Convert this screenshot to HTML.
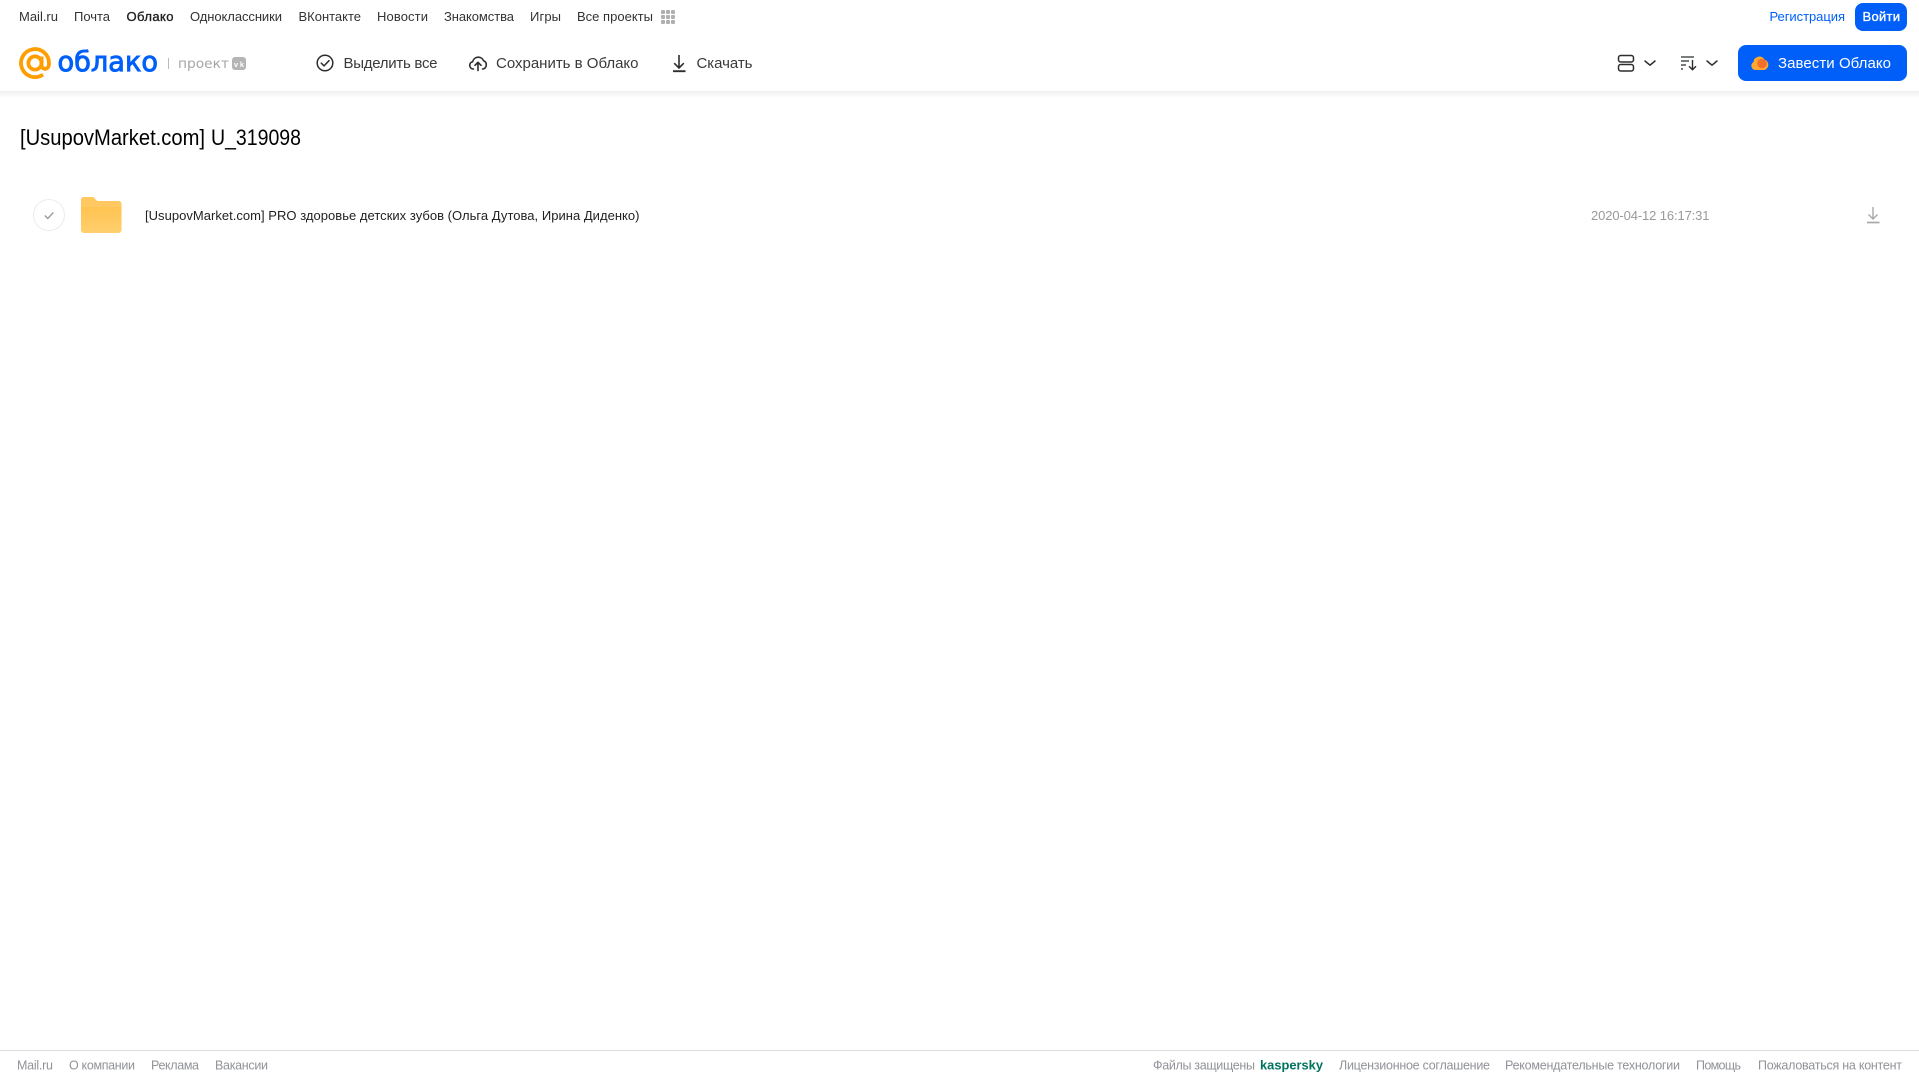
<!DOCTYPE html>
<html lang="ru"><head><meta charset="utf-8"><title>[UsupovMarket.com] U_319098</title>
<style>
html,body{margin:0;padding:0;background:#fff;width:1919px;height:1079px;overflow:hidden}
svg{display:block;position:absolute;left:0;top:0}
text{font-family:"Liberation Sans",Arial,sans-serif}
.n{font-size:13px;fill:#333}
.h{font-size:15px;fill:#3a3a3a}
.f{font-size:12.5px;fill:#919399}
</style></head><body>
<svg width="1919" height="1079" viewBox="0 0 1919 1079" xmlns="http://www.w3.org/2000/svg">
<defs>
<linearGradient id="sh" x1="0" y1="0" x2="0" y2="1"><stop offset="0" stop-color="#f0f0f0"/><stop offset="1" stop-color="#fff"/></linearGradient>
<linearGradient id="fd" x1="0" y1="0" x2="0" y2="1"><stop offset="0" stop-color="#ffbe45"/><stop offset="1" stop-color="#ffcf6e"/></linearGradient>
</defs>
<rect x="0" y="91" width="1919" height="7" fill="url(#sh)"/>

<!-- top nav -->
<g class="nav">
<text class="n" x="19" y="21" textLength="39">Mail.ru</text>
<text class="n" x="74" y="21" textLength="36">Почта</text>
<text class="n" x="126.5" y="21" textLength="47" stroke="#222" stroke-width=".35" style="fill:#222">Облако</text>
<text class="n" x="190" y="21" textLength="92">Одноклассники</text>
<text class="n" x="298.5" y="21" textLength="62.5">ВКонтакте</text>
<text class="n" x="377" y="21" textLength="51">Новости</text>
<text class="n" x="444" y="21" textLength="70">Знакомства</text>
<text class="n" x="530" y="21" textLength="31">Игры</text>
<text class="n" x="577" y="21" textLength="76">Все проекты</text>
</g>
<g fill="#b0b0b0">
<rect x="661" y="10" width="4" height="4" rx="1"/><rect x="666" y="10" width="4" height="4" rx="1"/><rect x="671" y="10" width="4" height="4" rx="1"/>
<rect x="661" y="15" width="4" height="4" rx="1"/><rect x="666" y="15" width="4" height="4" rx="1"/><rect x="671" y="15" width="4" height="4" rx="1"/>
<rect x="661" y="20" width="4" height="4" rx="1"/><rect x="666" y="20" width="4" height="4" rx="1"/><rect x="671" y="20" width="4" height="4" rx="1"/>
</g>
<text x="1769.5" y="21" font-size="13" fill="#005ff9" textLength="75.5">Регистрация</text>
<rect x="1855" y="3" width="52" height="28" rx="8" fill="#005ff9"/>
<text x="1862.5" y="21" font-size="13" stroke="#fff" stroke-width=".35" fill="#fff" textLength="37.5">Войти</text>

<!-- logo -->
<g fill="none" stroke="#ff9e00" stroke-width="3.8">
<circle cx="35" cy="63" r="6.6"/>
<path d="M41.6 56.5V65.5C41.6 70 49 70.5 49 63.5A14 14 0 1 0 43 74.6"/>
</g>
<text x="57.5" y="71" font-size="28" fill="#005ff9" stroke="#005ff9" stroke-width=".9" style="font-family:'DejaVu Sans',sans-serif" textLength="100.5" lengthAdjust="spacingAndGlyphs">облако</text>
<rect x="168" y="58" width="1" height="11" fill="#bbb"/>
<text x="178" y="68" font-size="13.5" fill="#a6a6a6" style="font-family:'DejaVu Sans',sans-serif" textLength="51" lengthAdjust="spacingAndGlyphs">проект</text>
<rect x="232" y="57" width="14" height="13" rx="3" fill="#b5b5b5"/>
<text x="234" y="67" font-size="7.5" font-weight="700" fill="#fff" textLength="10">vk</text>

<!-- toolbar -->
<g fill="none" stroke="#2c2d2e" stroke-width="1.5">
<circle cx="325" cy="63" r="7.8"/>
<path d="M321.3 63.2l2.7 2.7 5-5.2" stroke-linecap="round" stroke-linejoin="round"/>
</g>
<text class="h" x="343.5" y="68" textLength="94">Выделить все</text>
<g fill="none" stroke="#2c2d2e" stroke-width="1.6" stroke-linecap="round" stroke-linejoin="round">
<path d="M473.5 69H473A3.7 3.7 0 0 1 472.7 61.7A5.7 5.7 0 0 1 483.6 60.8A4.3 4.3 0 0 1 482.8 69H482.5"/>
<path d="M478 70.5V62.5M475 65.3L478 62.3L481 65.3"/>
</g>
<text class="h" x="496" y="68" textLength="142.5">Сохранить в Облако</text>
<g fill="none" stroke="#2c2d2e" stroke-width="1.6">
<path d="M679 55V68M674.2 63.2L679 68L683.8 63.2"/>
<path d="M673 71.2H685.5" stroke-width="1.9"/>
</g>
<text class="h" x="696.5" y="68" textLength="56">Скачать</text>

<!-- right tools -->
<g fill="none" stroke="#2c2d2e" stroke-width="1.5">
<rect x="1618.5" y="55.5" width="15" height="6.5" rx="2.2"/>
<rect x="1618.5" y="64.5" width="15" height="6.5" rx="2.2"/>
<path d="M1645 61l5 4.2 5-4.2" stroke-linecap="round" stroke-linejoin="round"/>
<path d="M1681 57H1694M1681 61H1689M1681 65H1686M1681 69H1683" stroke-width="1.2"/>
<path d="M1692.5 60V69.5M1689 66.2l3.5 3.5 3.5-3.5" stroke-width="1.4"/>
<path d="M1707 61l5 4.2 5-4.2" stroke-linecap="round" stroke-linejoin="round"/>
</g>
<rect x="1738" y="45" width="169" height="36" rx="8" fill="#005ff9"/>
<path d="M1755.5 70A4.3 4.3 0 0 1 1753.5 62A5.5 5.5 0 0 1 1757.5 57A5.5 5.5 0 0 1 1764.5 59.5A5.5 5.5 0 0 1 1764.5 70Z" fill="#ffa930"/>
<circle cx="1762" cy="63.5" r="4.8" fill="#f2702a"/>
<text x="1778" y="68" font-size="15" fill="#fff" textLength="113">Завести Облако</text>

<!-- title -->
<text x="20" y="145" font-size="22" fill="#000" textLength="185" lengthAdjust="spacingAndGlyphs">[UsupovMarket.com]</text>
<text x="211" y="145" font-size="22" fill="#000" textLength="90" lengthAdjust="spacingAndGlyphs">U_319098</text>

<!-- row -->
<circle cx="49" cy="215" r="15.5" fill="#fff" stroke="#ececec"/>
<path d="M44.8 215.5l3 3 5.5-6" fill="none" stroke="#999" stroke-width="1.3"/>
<path d="M81 200A3 3 0 0 1 84 197H92C95 197 95.5 201 98 201H118.5A3 3 0 0 1 121.5 204V230A3 3 0 0 1 118.5 233H84A3 3 0 0 1 81 230Z" fill="url(#fd)"/>
<path d="M81 200A3 3 0 0 1 84 197H92C95 197 95.5 201 98 201H118.5A3 3 0 0 1 121.5 204V207H81Z" fill="#ffc861"/>
<text x="145" y="220" font-size="13" fill="#222" textLength="494.5">[UsupovMarket.com] PRO здоровье детских зубов (Ольга Дутова, Ирина Диденко)</text>
<text x="1591" y="220" font-size="13" fill="#999" textLength="118.5">2020-04-12 16:17:31</text>
<g fill="none" stroke="#a8a8a8" stroke-width="1.4">
<path d="M1873 207V219M1868.5 214.5L1873 219L1877.5 214.5"/>
<path d="M1867 222.5H1879.5" stroke-width="1.7"/>
</g>

<!-- footer -->
<rect x="0" y="1050" width="1919" height="1" fill="#dcdcdc"/>
<text class="f" x="17" y="1069.5" textLength="36">Mail.ru</text>
<text class="f" x="69" y="1069.5" textLength="66">О компании</text>
<text class="f" x="151" y="1069.5" textLength="48">Реклама</text>
<text class="f" x="215" y="1069.5" textLength="53">Вакансии</text>
<text class="f" x="1153" y="1069.5" textLength="102">Файлы защищены</text>
<text x="1260" y="1069.5" font-size="13" font-weight="700" fill="#00735e" textLength="63" lengthAdjust="spacingAndGlyphs">kaspersky</text>
<text class="f" x="1339" y="1069.5" textLength="151">Лицензионное соглашение</text>
<text class="f" x="1505" y="1069.5" textLength="175">Рекомендательные технологии</text>
<text class="f" x="1696" y="1069.5" textLength="45">Помощь</text>
<text class="f" x="1758" y="1069.5" textLength="144">Пожаловаться на контент</text>
</svg>
</body></html>
